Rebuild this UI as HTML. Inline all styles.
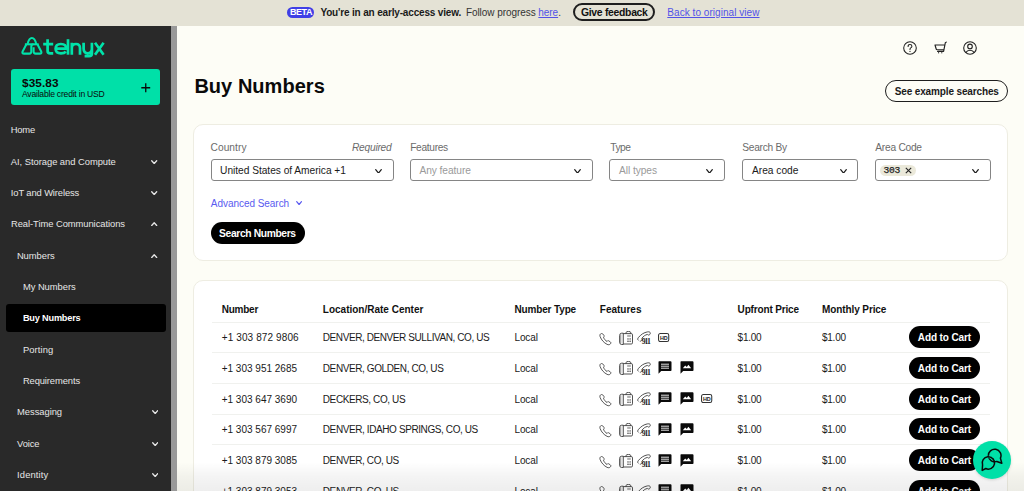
<!DOCTYPE html>
<html><head><meta charset="utf-8">
<style>
*{box-sizing:border-box;margin:0;padding:0}
html,body{width:1024px;height:491px;overflow:hidden;font-family:"Liberation Sans",sans-serif;background:#fdfdf6;color:#111}
.a{position:absolute}
.t{position:absolute;white-space:pre;line-height:normal}
.chev{position:absolute}
.sel{position:absolute;top:159.2px;height:22px;border:1px solid #858585;border-radius:3px;background:#fff}
.line{position:absolute;left:211.5px;width:778px;height:1px;background:#f0f1ee}
.cartbtn{position:absolute;left:909px;width:70.5px;height:22px;border-radius:11px;background:#000}
</style></head><body>
<!-- banner -->
<div class="a" style="left:0;top:0;width:1024px;height:25.6px;background:#e4e2d5"></div>
<div class="a" style="left:286.8px;top:7.3px;width:27px;height:11px;border-radius:5.5px;background:#3f3fe6"></div>
<div class="t" style="left:290px;top:7.3px;font-size:9px;font-weight:bold;color:#fff;letter-spacing:-0.45px;line-height:11px">BETA</div>
<div class="a" style="left:572.7px;top:3.4px;width:82.6px;height:17.4px;border:2px solid #1e1e1e;border-radius:9px"></div>
<div class="t" style="left:581px;top:7.1px;font-size:10.4px;font-weight:bold;color:#111;letter-spacing:-0.3px">Give feedback</div>
<div class="t" style="left:667.3px;top:6.7px;font-size:10px;color:#5252e8;text-decoration:underline;letter-spacing:0.05px">Back to original view</div>
<!-- sidebar -->
<div class="a" style="left:0;top:25.6px;width:172px;height:466px;background:#292929"></div>
<div class="a" style="left:171.1px;top:25.6px;width:5.5px;height:466px;background:#999"></div>
<div class="a" style="left:5.5px;top:304px;width:160px;height:28px;border-radius:3px;background:#000"></div>
<div class="a" style="left:11px;top:69px;width:149px;height:35.7px;border-radius:3px;background:#00e0a8"></div>
<svg class="a" style="left:140.8px;top:82.6px" width="10" height="10" viewBox="0 0 10 10"><path d="M4.75 0.3V9.2M0.3 4.75H9.2" stroke="#0a0a0a" stroke-width="1.3"/></svg>
<!-- logo icon -->
<svg class="a" style="left:20px;top:35px" width="24" height="22" viewBox="0 0 24 22" fill="none" stroke="#00e3aa" stroke-width="2.05" stroke-linejoin="round" stroke-linecap="butt">
<path d="M7.5 9.3 C9.4 1 14.4 1 16.3 9.3"/>
<path d="M4.9 9.3 H18.6"/>
<path d="M6.4 9.3 L2.6 16.4 Q1.7 18.6 4.1 18.6 H9.4 Q11.3 18.6 11.3 16.5 V11.5 Q11.3 9.3 13.4 9.3"/>
<path d="M17.4 9.3 L21.2 16.4 Q22.1 18.6 19.7 18.6 H15.6 Q13.6 18.6 13.6 16.5 V12.3"/>
</svg>
<svg class="a" style="left:42px;top:35px" width="66" height="26" viewBox="0 0 66 26" fill="none" stroke="#00e3aa" stroke-width="2.7" stroke-linejoin="round">
<path d="M5.6 4.2 V16 Q5.6 18.4 8.2 18.4 H11.2 M1.2 9.2 H11.2"/>
<path d="M13.6 13.7 H24.3 Q24.3 9 18.9 9 Q13.6 9 13.6 13.8 Q13.6 18.4 19 18.4 Q22.4 18.4 23.8 16.6"/>
<path d="M26 4.2 V19.7"/>
<path d="M29.8 19.7 V7.8 M29.8 13.2 Q29.8 9 34 9 Q38 9 38 13.2 V19.7"/>
<path d="M41.6 7.8 V13.6 Q41.6 18.4 45.8 18.4 Q49.9 18.4 49.9 13.6 M49.9 7.8 V18.6 Q49.9 21.2 47 21.2 H42.6"/>
<path d="M53 7.8 L61.6 19.7 M61.6 7.8 L53 19.7"/>
</svg>
<!-- header icons -->
<svg class="a" style="left:902.4px;top:39.8px" width="16" height="16" viewBox="0 0 16 16" fill="none" stroke="#222" stroke-width="1.05"><circle cx="8" cy="8" r="6.3"/><path d="M6.1 6.4 Q6.1 4.5 8 4.5 Q9.9 4.5 9.9 6.2 Q9.9 7.3 8.7 7.9 Q8 8.3 8 9.5" stroke-linecap="round"/><circle cx="8" cy="11.4" r="0.6" fill="#222" stroke="none"/></svg>
<svg class="a" style="left:932.5px;top:40.8px" width="15" height="14" viewBox="0 0 15 14" fill="none" stroke="#222" stroke-width="1.15" stroke-linejoin="round" stroke-linecap="round"><path d="M2 4 H10.9 M2 4 L3.2 8 Q3.4 8.7 4.2 8.7 H10.6 M4.6 10.4 H10.6 L12.3 1.8 L13.3 1.1"/><g fill="#222" stroke="none"><rect x="5" y="10.9" width="1.1" height="1.5" fill="#555"/><rect x="8.2" y="10.9" width="1.1" height="1.5" fill="#555"/></g></svg>
<svg class="a" style="left:962.4px;top:39.8px" width="16" height="16" viewBox="0 0 16 16" fill="none" stroke="#222" stroke-width="1.1"><circle cx="8" cy="8" r="6.3"/><circle cx="8" cy="6.4" r="2.3"/><path d="M3.8 12.6 Q5.2 10.2 8 10.2 Q10.8 10.2 12.2 12.6"/></svg>
<!-- see example -->
<div class="a" style="left:885.4px;top:80.2px;width:122.5px;height:21.5px;border:1.7px solid #1e1e1e;border-radius:11px"></div>
<!-- search card -->
<div class="a" style="left:192.9px;top:123.8px;width:815px;height:137.2px;background:#fff;border:1px solid #eeede2;border-radius:10px"></div>
<div class="sel" style="left:210.5px;width:183px"></div>
<div class="sel" style="left:410.2px;width:182.6px"></div>
<div class="sel" style="left:609.2px;width:116.2px"></div>
<div class="sel" style="left:742.2px;width:115.9px"></div>
<div class="sel" style="left:875.3px;width:116px"></div>
<div class="a" style="left:880px;top:164.5px;width:36.3px;height:11.7px;border-radius:6px;background:#ebe9da"></div>
<div class="t" style="left:883.6px;top:165px;font-family:'Liberation Mono',monospace;font-size:9.6px;color:#222;letter-spacing:-0.3px;-webkit-text-stroke:0.25px #222">303</div>
<svg class="a" style="left:904.6px;top:167.4px" width="7" height="7" viewBox="0 0 7 7"><path d="M0.8 0.8L6.2 6.2M6.2 0.8L0.8 6.2" stroke="#222" stroke-width="1.1"/></svg>
<div class="a" style="left:210.5px;top:222.3px;width:94px;height:21.5px;border-radius:11px;background:#000"></div>
<!-- results card -->
<div class="a" style="left:192.9px;top:280px;width:815.3px;height:260px;background:#fff;border:1px solid #eeede2;border-radius:10px"></div>
<div class="line" style="top:322px"></div>
<div class="line" style="top:352px"></div>
<div class="line" style="top:383px"></div>
<div class="line" style="top:413.5px"></div>
<div class="line" style="top:444px"></div>
<div class="cartbtn" style="top:326.20px"></div>
<div class="cartbtn" style="top:356.95px"></div>
<div class="cartbtn" style="top:387.70px"></div>
<div class="cartbtn" style="top:418.45px"></div>
<div class="cartbtn" style="top:449.20px"></div>
<div class="cartbtn" style="top:479.95px"></div>
<svg class="a" style="left:599.3px;top:332.6px" width="13" height="13" viewBox="0 0 13 13" fill="none" stroke="#3a3a3a" stroke-width="0.85" stroke-linejoin="round"><path d="M1.6 0.9 C2.4 0.2 3.3 0.3 3.8 1 L5 2.5 C5.5 3.2 5.2 3.7 4.5 4.2 C5.2 6.2 6.3 7.5 8 8.4 C8.5 7.7 9 7.4 9.7 7.8 L11.3 8.9 C12 9.4 12 10.2 11.4 10.9 C10.5 11.9 9.3 12 8 11.3 C5 9.8 2.4 7 1.1 3.6 C0.7 2.5 0.9 1.5 1.6 0.9 Z"/></svg>
<svg class="a" style="left:618.5px;top:330.6px" width="14" height="14" viewBox="0 0 14 14" fill="none" stroke="#333" stroke-width="0.85"><path d="M4.3 2.2 H2.6 Q0.6 2.2 0.6 4.6 V11 Q0.6 13.5 2.6 13.5 H4.3 Z" fill="#f4f4f4"/><path d="M1.7 3.6 V12.1" stroke="#999" stroke-width="1"/><path d="M4.3 2.6 H12.3 Q13.5 2.6 13.5 3.8 V11.8 Q13.5 13 12.3 13 H4.3"/><path d="M7 2.6 V1.8 Q7 0.4 9.4 0.4 Q11.8 0.4 11.8 1.8 V2.6"/><path d="M8.2 4.4 H11.8 M8.2 5.4 H11.8" stroke-width="0.55" stroke="#666"/><g fill="#333" stroke="none"><circle cx="9" cy="7.9" r="0.72"/><circle cx="11.1" cy="7.9" r="0.72"/><circle cx="9" cy="10.2" r="0.72"/><circle cx="11.1" cy="10.2" r="0.72"/></g></svg>
<svg class="a" style="left:637.3px;top:330.8px" width="15" height="15" viewBox="0 0 15 15" fill="none" stroke="#333" stroke-width="0.85" stroke-linejoin="round"><path d="M1.4 9.4 C0.4 8.6 0.6 7.5 1.5 6.4 C4.2 3.2 7 1.6 10.4 0.9 C12.2 0.6 13.3 1.1 13.3 2.1 C13.3 3.2 12.5 4 11.6 4.1 C11 4.1 10.7 3.7 10.5 3.4 C8.2 3.9 6.4 5.2 4.9 7.3 C5.3 7.8 5.4 8.4 5 9 C4.4 9.9 3.6 10.3 2.8 10.2"/><text x="4.7" y="12.7" font-family="Liberation Serif" font-weight="bold" font-size="7.7" fill="#1a1a1a" stroke="none" letter-spacing="-0.95">911</text></svg>
<svg class="a" style="left:658.1px;top:332.7px" width="12" height="10" viewBox="0 0 12 10"><rect x="0.55" y="0.55" width="10.2" height="8" rx="1.7" fill="none" stroke="#333" stroke-width="1.05"/><text x="5.65" y="6.5" text-anchor="middle" font-family="Liberation Sans" font-weight="bold" font-size="5.4" fill="#1a1a1a" letter-spacing="-0.15">HD</text></svg>
<svg class="a" style="left:599.3px;top:363.35px" width="13" height="13" viewBox="0 0 13 13" fill="none" stroke="#3a3a3a" stroke-width="0.85" stroke-linejoin="round"><path d="M1.6 0.9 C2.4 0.2 3.3 0.3 3.8 1 L5 2.5 C5.5 3.2 5.2 3.7 4.5 4.2 C5.2 6.2 6.3 7.5 8 8.4 C8.5 7.7 9 7.4 9.7 7.8 L11.3 8.9 C12 9.4 12 10.2 11.4 10.9 C10.5 11.9 9.3 12 8 11.3 C5 9.8 2.4 7 1.1 3.6 C0.7 2.5 0.9 1.5 1.6 0.9 Z"/></svg>
<svg class="a" style="left:618.5px;top:361.35px" width="14" height="14" viewBox="0 0 14 14" fill="none" stroke="#333" stroke-width="0.85"><path d="M4.3 2.2 H2.6 Q0.6 2.2 0.6 4.6 V11 Q0.6 13.5 2.6 13.5 H4.3 Z" fill="#f4f4f4"/><path d="M1.7 3.6 V12.1" stroke="#999" stroke-width="1"/><path d="M4.3 2.6 H12.3 Q13.5 2.6 13.5 3.8 V11.8 Q13.5 13 12.3 13 H4.3"/><path d="M7 2.6 V1.8 Q7 0.4 9.4 0.4 Q11.8 0.4 11.8 1.8 V2.6"/><path d="M8.2 4.4 H11.8 M8.2 5.4 H11.8" stroke-width="0.55" stroke="#666"/><g fill="#333" stroke="none"><circle cx="9" cy="7.9" r="0.72"/><circle cx="11.1" cy="7.9" r="0.72"/><circle cx="9" cy="10.2" r="0.72"/><circle cx="11.1" cy="10.2" r="0.72"/></g></svg>
<svg class="a" style="left:637.3px;top:361.55px" width="15" height="15" viewBox="0 0 15 15" fill="none" stroke="#333" stroke-width="0.85" stroke-linejoin="round"><path d="M1.4 9.4 C0.4 8.6 0.6 7.5 1.5 6.4 C4.2 3.2 7 1.6 10.4 0.9 C12.2 0.6 13.3 1.1 13.3 2.1 C13.3 3.2 12.5 4 11.6 4.1 C11 4.1 10.7 3.7 10.5 3.4 C8.2 3.9 6.4 5.2 4.9 7.3 C5.3 7.8 5.4 8.4 5 9 C4.4 9.9 3.6 10.3 2.8 10.2"/><text x="4.7" y="12.7" font-family="Liberation Serif" font-weight="bold" font-size="7.7" fill="#1a1a1a" stroke="none" letter-spacing="-0.95">911</text></svg>
<svg class="a" style="left:658.1px;top:361.45px" width="14" height="13" viewBox="0 0 14 13"><path d="M1 0.3 H12.6 Q13.5 0.3 13.5 1.2 V9.2 Q13.5 10 12.6 10 H3.2 L0.5 12.8 V1.2 Q0.5 0.3 1 0.3 Z" fill="#0a0a0a"/><path d="M3 3.2 H11 M3 5.2 H11 M3 7.2 H11" stroke="#fff" stroke-width="0.9"/></svg>
<svg class="a" style="left:679.8px;top:361.45px" width="14" height="13" viewBox="0 0 14 13"><path d="M1 0.3 H12.6 Q13.5 0.3 13.5 1.2 V9.2 Q13.5 10 12.6 10 H3.2 L0.5 12.8 V1.2 Q0.5 0.3 1 0.3 Z" fill="#0a0a0a"/><path d="M2.8 7.2 L5.2 4.4 L6.8 6 L8.4 3.8 L11.2 7.2 Z" fill="#fff"/></svg>
<svg class="a" style="left:599.3px;top:394.1px" width="13" height="13" viewBox="0 0 13 13" fill="none" stroke="#3a3a3a" stroke-width="0.85" stroke-linejoin="round"><path d="M1.6 0.9 C2.4 0.2 3.3 0.3 3.8 1 L5 2.5 C5.5 3.2 5.2 3.7 4.5 4.2 C5.2 6.2 6.3 7.5 8 8.4 C8.5 7.7 9 7.4 9.7 7.8 L11.3 8.9 C12 9.4 12 10.2 11.4 10.9 C10.5 11.9 9.3 12 8 11.3 C5 9.8 2.4 7 1.1 3.6 C0.7 2.5 0.9 1.5 1.6 0.9 Z"/></svg>
<svg class="a" style="left:618.5px;top:392.1px" width="14" height="14" viewBox="0 0 14 14" fill="none" stroke="#333" stroke-width="0.85"><path d="M4.3 2.2 H2.6 Q0.6 2.2 0.6 4.6 V11 Q0.6 13.5 2.6 13.5 H4.3 Z" fill="#f4f4f4"/><path d="M1.7 3.6 V12.1" stroke="#999" stroke-width="1"/><path d="M4.3 2.6 H12.3 Q13.5 2.6 13.5 3.8 V11.8 Q13.5 13 12.3 13 H4.3"/><path d="M7 2.6 V1.8 Q7 0.4 9.4 0.4 Q11.8 0.4 11.8 1.8 V2.6"/><path d="M8.2 4.4 H11.8 M8.2 5.4 H11.8" stroke-width="0.55" stroke="#666"/><g fill="#333" stroke="none"><circle cx="9" cy="7.9" r="0.72"/><circle cx="11.1" cy="7.9" r="0.72"/><circle cx="9" cy="10.2" r="0.72"/><circle cx="11.1" cy="10.2" r="0.72"/></g></svg>
<svg class="a" style="left:637.3px;top:392.3px" width="15" height="15" viewBox="0 0 15 15" fill="none" stroke="#333" stroke-width="0.85" stroke-linejoin="round"><path d="M1.4 9.4 C0.4 8.6 0.6 7.5 1.5 6.4 C4.2 3.2 7 1.6 10.4 0.9 C12.2 0.6 13.3 1.1 13.3 2.1 C13.3 3.2 12.5 4 11.6 4.1 C11 4.1 10.7 3.7 10.5 3.4 C8.2 3.9 6.4 5.2 4.9 7.3 C5.3 7.8 5.4 8.4 5 9 C4.4 9.9 3.6 10.3 2.8 10.2"/><text x="4.7" y="12.7" font-family="Liberation Serif" font-weight="bold" font-size="7.7" fill="#1a1a1a" stroke="none" letter-spacing="-0.95">911</text></svg>
<svg class="a" style="left:658.1px;top:392.2px" width="14" height="13" viewBox="0 0 14 13"><path d="M1 0.3 H12.6 Q13.5 0.3 13.5 1.2 V9.2 Q13.5 10 12.6 10 H3.2 L0.5 12.8 V1.2 Q0.5 0.3 1 0.3 Z" fill="#0a0a0a"/><path d="M3 3.2 H11 M3 5.2 H11 M3 7.2 H11" stroke="#fff" stroke-width="0.9"/></svg>
<svg class="a" style="left:679.8px;top:392.2px" width="14" height="13" viewBox="0 0 14 13"><path d="M1 0.3 H12.6 Q13.5 0.3 13.5 1.2 V9.2 Q13.5 10 12.6 10 H3.2 L0.5 12.8 V1.2 Q0.5 0.3 1 0.3 Z" fill="#0a0a0a"/><path d="M2.8 7.2 L5.2 4.4 L6.8 6 L8.4 3.8 L11.2 7.2 Z" fill="#fff"/></svg>
<svg class="a" style="left:700.9px;top:394.2px" width="12" height="10" viewBox="0 0 12 10"><rect x="0.55" y="0.55" width="10.2" height="8" rx="1.7" fill="none" stroke="#333" stroke-width="1.05"/><text x="5.65" y="6.5" text-anchor="middle" font-family="Liberation Sans" font-weight="bold" font-size="5.4" fill="#1a1a1a" letter-spacing="-0.15">HD</text></svg>
<svg class="a" style="left:599.3px;top:424.85px" width="13" height="13" viewBox="0 0 13 13" fill="none" stroke="#3a3a3a" stroke-width="0.85" stroke-linejoin="round"><path d="M1.6 0.9 C2.4 0.2 3.3 0.3 3.8 1 L5 2.5 C5.5 3.2 5.2 3.7 4.5 4.2 C5.2 6.2 6.3 7.5 8 8.4 C8.5 7.7 9 7.4 9.7 7.8 L11.3 8.9 C12 9.4 12 10.2 11.4 10.9 C10.5 11.9 9.3 12 8 11.3 C5 9.8 2.4 7 1.1 3.6 C0.7 2.5 0.9 1.5 1.6 0.9 Z"/></svg>
<svg class="a" style="left:618.5px;top:422.85px" width="14" height="14" viewBox="0 0 14 14" fill="none" stroke="#333" stroke-width="0.85"><path d="M4.3 2.2 H2.6 Q0.6 2.2 0.6 4.6 V11 Q0.6 13.5 2.6 13.5 H4.3 Z" fill="#f4f4f4"/><path d="M1.7 3.6 V12.1" stroke="#999" stroke-width="1"/><path d="M4.3 2.6 H12.3 Q13.5 2.6 13.5 3.8 V11.8 Q13.5 13 12.3 13 H4.3"/><path d="M7 2.6 V1.8 Q7 0.4 9.4 0.4 Q11.8 0.4 11.8 1.8 V2.6"/><path d="M8.2 4.4 H11.8 M8.2 5.4 H11.8" stroke-width="0.55" stroke="#666"/><g fill="#333" stroke="none"><circle cx="9" cy="7.9" r="0.72"/><circle cx="11.1" cy="7.9" r="0.72"/><circle cx="9" cy="10.2" r="0.72"/><circle cx="11.1" cy="10.2" r="0.72"/></g></svg>
<svg class="a" style="left:637.3px;top:423.05px" width="15" height="15" viewBox="0 0 15 15" fill="none" stroke="#333" stroke-width="0.85" stroke-linejoin="round"><path d="M1.4 9.4 C0.4 8.6 0.6 7.5 1.5 6.4 C4.2 3.2 7 1.6 10.4 0.9 C12.2 0.6 13.3 1.1 13.3 2.1 C13.3 3.2 12.5 4 11.6 4.1 C11 4.1 10.7 3.7 10.5 3.4 C8.2 3.9 6.4 5.2 4.9 7.3 C5.3 7.8 5.4 8.4 5 9 C4.4 9.9 3.6 10.3 2.8 10.2"/><text x="4.7" y="12.7" font-family="Liberation Serif" font-weight="bold" font-size="7.7" fill="#1a1a1a" stroke="none" letter-spacing="-0.95">911</text></svg>
<svg class="a" style="left:658.1px;top:422.95px" width="14" height="13" viewBox="0 0 14 13"><path d="M1 0.3 H12.6 Q13.5 0.3 13.5 1.2 V9.2 Q13.5 10 12.6 10 H3.2 L0.5 12.8 V1.2 Q0.5 0.3 1 0.3 Z" fill="#0a0a0a"/><path d="M3 3.2 H11 M3 5.2 H11 M3 7.2 H11" stroke="#fff" stroke-width="0.9"/></svg>
<svg class="a" style="left:679.8px;top:422.95px" width="14" height="13" viewBox="0 0 14 13"><path d="M1 0.3 H12.6 Q13.5 0.3 13.5 1.2 V9.2 Q13.5 10 12.6 10 H3.2 L0.5 12.8 V1.2 Q0.5 0.3 1 0.3 Z" fill="#0a0a0a"/><path d="M2.8 7.2 L5.2 4.4 L6.8 6 L8.4 3.8 L11.2 7.2 Z" fill="#fff"/></svg>
<svg class="a" style="left:599.3px;top:455.6px" width="13" height="13" viewBox="0 0 13 13" fill="none" stroke="#3a3a3a" stroke-width="0.85" stroke-linejoin="round"><path d="M1.6 0.9 C2.4 0.2 3.3 0.3 3.8 1 L5 2.5 C5.5 3.2 5.2 3.7 4.5 4.2 C5.2 6.2 6.3 7.5 8 8.4 C8.5 7.7 9 7.4 9.7 7.8 L11.3 8.9 C12 9.4 12 10.2 11.4 10.9 C10.5 11.9 9.3 12 8 11.3 C5 9.8 2.4 7 1.1 3.6 C0.7 2.5 0.9 1.5 1.6 0.9 Z"/></svg>
<svg class="a" style="left:618.5px;top:453.6px" width="14" height="14" viewBox="0 0 14 14" fill="none" stroke="#333" stroke-width="0.85"><path d="M4.3 2.2 H2.6 Q0.6 2.2 0.6 4.6 V11 Q0.6 13.5 2.6 13.5 H4.3 Z" fill="#f4f4f4"/><path d="M1.7 3.6 V12.1" stroke="#999" stroke-width="1"/><path d="M4.3 2.6 H12.3 Q13.5 2.6 13.5 3.8 V11.8 Q13.5 13 12.3 13 H4.3"/><path d="M7 2.6 V1.8 Q7 0.4 9.4 0.4 Q11.8 0.4 11.8 1.8 V2.6"/><path d="M8.2 4.4 H11.8 M8.2 5.4 H11.8" stroke-width="0.55" stroke="#666"/><g fill="#333" stroke="none"><circle cx="9" cy="7.9" r="0.72"/><circle cx="11.1" cy="7.9" r="0.72"/><circle cx="9" cy="10.2" r="0.72"/><circle cx="11.1" cy="10.2" r="0.72"/></g></svg>
<svg class="a" style="left:637.3px;top:453.8px" width="15" height="15" viewBox="0 0 15 15" fill="none" stroke="#333" stroke-width="0.85" stroke-linejoin="round"><path d="M1.4 9.4 C0.4 8.6 0.6 7.5 1.5 6.4 C4.2 3.2 7 1.6 10.4 0.9 C12.2 0.6 13.3 1.1 13.3 2.1 C13.3 3.2 12.5 4 11.6 4.1 C11 4.1 10.7 3.7 10.5 3.4 C8.2 3.9 6.4 5.2 4.9 7.3 C5.3 7.8 5.4 8.4 5 9 C4.4 9.9 3.6 10.3 2.8 10.2"/><text x="4.7" y="12.7" font-family="Liberation Serif" font-weight="bold" font-size="7.7" fill="#1a1a1a" stroke="none" letter-spacing="-0.95">911</text></svg>
<svg class="a" style="left:658.1px;top:453.7px" width="14" height="13" viewBox="0 0 14 13"><path d="M1 0.3 H12.6 Q13.5 0.3 13.5 1.2 V9.2 Q13.5 10 12.6 10 H3.2 L0.5 12.8 V1.2 Q0.5 0.3 1 0.3 Z" fill="#0a0a0a"/><path d="M3 3.2 H11 M3 5.2 H11 M3 7.2 H11" stroke="#fff" stroke-width="0.9"/></svg>
<svg class="a" style="left:679.8px;top:453.7px" width="14" height="13" viewBox="0 0 14 13"><path d="M1 0.3 H12.6 Q13.5 0.3 13.5 1.2 V9.2 Q13.5 10 12.6 10 H3.2 L0.5 12.8 V1.2 Q0.5 0.3 1 0.3 Z" fill="#0a0a0a"/><path d="M2.8 7.2 L5.2 4.4 L6.8 6 L8.4 3.8 L11.2 7.2 Z" fill="#fff"/></svg>
<svg class="a" style="left:599.3px;top:486.35px" width="13" height="13" viewBox="0 0 13 13" fill="none" stroke="#3a3a3a" stroke-width="0.85" stroke-linejoin="round"><path d="M1.6 0.9 C2.4 0.2 3.3 0.3 3.8 1 L5 2.5 C5.5 3.2 5.2 3.7 4.5 4.2 C5.2 6.2 6.3 7.5 8 8.4 C8.5 7.7 9 7.4 9.7 7.8 L11.3 8.9 C12 9.4 12 10.2 11.4 10.9 C10.5 11.9 9.3 12 8 11.3 C5 9.8 2.4 7 1.1 3.6 C0.7 2.5 0.9 1.5 1.6 0.9 Z"/></svg>
<svg class="a" style="left:618.5px;top:484.35px" width="14" height="14" viewBox="0 0 14 14" fill="none" stroke="#333" stroke-width="0.85"><path d="M4.3 2.2 H2.6 Q0.6 2.2 0.6 4.6 V11 Q0.6 13.5 2.6 13.5 H4.3 Z" fill="#f4f4f4"/><path d="M1.7 3.6 V12.1" stroke="#999" stroke-width="1"/><path d="M4.3 2.6 H12.3 Q13.5 2.6 13.5 3.8 V11.8 Q13.5 13 12.3 13 H4.3"/><path d="M7 2.6 V1.8 Q7 0.4 9.4 0.4 Q11.8 0.4 11.8 1.8 V2.6"/><path d="M8.2 4.4 H11.8 M8.2 5.4 H11.8" stroke-width="0.55" stroke="#666"/><g fill="#333" stroke="none"><circle cx="9" cy="7.9" r="0.72"/><circle cx="11.1" cy="7.9" r="0.72"/><circle cx="9" cy="10.2" r="0.72"/><circle cx="11.1" cy="10.2" r="0.72"/></g></svg>
<svg class="a" style="left:637.3px;top:484.55px" width="15" height="15" viewBox="0 0 15 15" fill="none" stroke="#333" stroke-width="0.85" stroke-linejoin="round"><path d="M1.4 9.4 C0.4 8.6 0.6 7.5 1.5 6.4 C4.2 3.2 7 1.6 10.4 0.9 C12.2 0.6 13.3 1.1 13.3 2.1 C13.3 3.2 12.5 4 11.6 4.1 C11 4.1 10.7 3.7 10.5 3.4 C8.2 3.9 6.4 5.2 4.9 7.3 C5.3 7.8 5.4 8.4 5 9 C4.4 9.9 3.6 10.3 2.8 10.2"/><text x="4.7" y="12.7" font-family="Liberation Serif" font-weight="bold" font-size="7.7" fill="#1a1a1a" stroke="none" letter-spacing="-0.95">911</text></svg>
<svg class="a" style="left:658.1px;top:484.45px" width="14" height="13" viewBox="0 0 14 13"><path d="M1 0.3 H12.6 Q13.5 0.3 13.5 1.2 V9.2 Q13.5 10 12.6 10 H3.2 L0.5 12.8 V1.2 Q0.5 0.3 1 0.3 Z" fill="#0a0a0a"/><path d="M3 3.2 H11 M3 5.2 H11 M3 7.2 H11" stroke="#fff" stroke-width="0.9"/></svg>
<svg class="a" style="left:679.8px;top:484.45px" width="14" height="13" viewBox="0 0 14 13"><path d="M1 0.3 H12.6 Q13.5 0.3 13.5 1.2 V9.2 Q13.5 10 12.6 10 H3.2 L0.5 12.8 V1.2 Q0.5 0.3 1 0.3 Z" fill="#0a0a0a"/><path d="M2.8 7.2 L5.2 4.4 L6.8 6 L8.4 3.8 L11.2 7.2 Z" fill="#fff"/></svg>
<div class="t" style="left:320.40px;top:6.68px;font-size:10px;color:#1a1a1a;font-weight:bold;letter-spacing:-0.163px;">You're in an early-access view.</div>
<div class="t" style="left:465.90px;top:6.68px;font-size:10px;color:#333;letter-spacing:-0.058px;">Follow progress <span style="color:#5252e8;text-decoration:underline">here</span>.</div>
<div class="t" style="left:10.80px;top:124.14px;font-size:9.4px;color:#e6e6e6;letter-spacing:-0.205px;">Home</div>
<div class="t" style="left:10.80px;top:155.74px;font-size:9.4px;color:#e6e6e6;letter-spacing:-0.036px;">AI, Storage and Compute</div>
<div class="t" style="left:10.80px;top:186.94px;font-size:9.4px;color:#e6e6e6;letter-spacing:-0.111px;">IoT and Wireless</div>
<div class="t" style="left:11.00px;top:218.34px;font-size:9.4px;color:#e6e6e6;letter-spacing:-0.057px;">Real-Time Communications</div>
<div class="t" style="left:16.90px;top:249.64px;font-size:9.4px;color:#e6e6e6;letter-spacing:-0.039px;">Numbers</div>
<div class="t" style="left:22.90px;top:280.84px;font-size:9.4px;color:#e6e6e6;letter-spacing:-0.038px;">My Numbers</div>
<div class="t" style="left:22.90px;top:343.74px;font-size:9.4px;color:#e6e6e6;letter-spacing:0.097px;">Porting</div>
<div class="t" style="left:22.90px;top:374.54px;font-size:9.4px;color:#e6e6e6;letter-spacing:-0.107px;">Requirements</div>
<div class="t" style="left:17.10px;top:406.44px;font-size:9.4px;color:#e6e6e6;letter-spacing:-0.043px;">Messaging</div>
<div class="t" style="left:17.10px;top:437.94px;font-size:9.4px;color:#e6e6e6;letter-spacing:-0.134px;">Voice</div>
<div class="t" style="left:17.10px;top:469.14px;font-size:9.4px;color:#e6e6e6;letter-spacing:0.124px;">Identity</div>
<div class="t" style="left:22.90px;top:313.12px;font-size:9.2px;color:#fff;font-weight:bold;letter-spacing:-0.193px;">Buy Numbers</div>
<div class="t" style="left:22.00px;top:76.02px;font-size:11.8px;color:#0a0a0a;font-weight:bold;letter-spacing:0.101px;">$35.83</div>
<div class="t" style="left:22.00px;top:88.87px;font-size:8.6px;color:#0a0a0a;letter-spacing:-0.224px;">Available credit in USD</div>
<div class="t" style="left:194.40px;top:74.67px;font-size:20px;color:#0a0a0a;font-weight:bold;letter-spacing:0.037px;">Buy Numbers</div>
<div class="t" style="left:894.70px;top:85.58px;font-size:10px;color:#1a1a1a;font-weight:bold;letter-spacing:-0.134px;">See example searches</div>
<div class="t" style="left:210.50px;top:142.30px;font-size:10.2px;color:#6b6b6b;letter-spacing:0.055px;">Country</div>
<div class="t" style="left:352.00px;top:142.30px;font-size:10.2px;color:#6b6b6b;font-style:italic;letter-spacing:-0.235px;">Required</div>
<div class="t" style="left:410.20px;top:142.30px;font-size:10.2px;color:#6b6b6b;letter-spacing:-0.315px;">Features</div>
<div class="t" style="left:610.20px;top:142.30px;font-size:10.2px;color:#6b6b6b;letter-spacing:-0.465px;">Type</div>
<div class="t" style="left:742.20px;top:142.30px;font-size:10.2px;color:#6b6b6b;letter-spacing:-0.250px;">Search By</div>
<div class="t" style="left:875.30px;top:142.30px;font-size:10.2px;color:#6b6b6b;letter-spacing:-0.252px;">Area Code</div>
<div class="t" style="left:220.10px;top:165.20px;font-size:10.2px;color:#1a1a1a;letter-spacing:-0.029px;">United States of America +1</div>
<div class="t" style="left:419.50px;top:165.20px;font-size:10.2px;color:#9a9a9a;letter-spacing:-0.071px;">Any feature</div>
<div class="t" style="left:619.00px;top:165.20px;font-size:10.2px;color:#9a9a9a;letter-spacing:-0.064px;">All types</div>
<div class="t" style="left:752.00px;top:165.20px;font-size:10.2px;color:#1a1a1a;">Area code</div>
<div class="t" style="left:210.80px;top:197.58px;font-size:10px;color:#5a5af0;letter-spacing:-0.040px;">Advanced Search</div>
<div class="t" style="left:219.10px;top:227.71px;font-size:10.3px;color:#fff;font-weight:bold;letter-spacing:-0.373px;">Search Numbers</div>
<div class="t" style="left:221.70px;top:303.98px;font-size:10px;color:#111;font-weight:bold;letter-spacing:-0.239px;">Number</div>
<div class="t" style="left:322.80px;top:303.98px;font-size:10px;color:#111;font-weight:bold;">Location/Rate Center</div>
<div class="t" style="left:514.40px;top:303.98px;font-size:10px;color:#111;font-weight:bold;letter-spacing:-0.137px;">Number Type</div>
<div class="t" style="left:599.80px;top:303.98px;font-size:10px;color:#111;font-weight:bold;">Features</div>
<div class="t" style="left:737.60px;top:303.98px;font-size:10px;color:#111;font-weight:bold;letter-spacing:-0.154px;">Upfront Price</div>
<div class="t" style="left:822.00px;top:303.98px;font-size:10px;color:#111;font-weight:bold;letter-spacing:-0.098px;">Monthly Price</div>
<div class="t" style="left:221.70px;top:332.08px;font-size:10px;color:#1a1a1a;letter-spacing:0.117px;">+1 303 872 9806</div>
<div class="t" style="left:322.80px;top:332.08px;font-size:10px;color:#1a1a1a;letter-spacing:-0.414px;">DENVER, DENVER SULLIVAN, CO, US</div>
<div class="t" style="left:514.40px;top:332.08px;font-size:10px;color:#1a1a1a;letter-spacing:-0.077px;">Local</div>
<div class="t" style="left:737.60px;top:332.08px;font-size:10px;color:#1a1a1a;letter-spacing:-0.258px;">$1.00</div>
<div class="t" style="left:822.00px;top:332.08px;font-size:10px;color:#1a1a1a;letter-spacing:-0.258px;">$1.00</div>
<div class="t" style="left:917.80px;top:332.08px;font-size:10px;color:#fff;font-weight:bold;letter-spacing:-0.115px;">Add to Cart</div>
<div class="t" style="left:221.70px;top:362.83px;font-size:10px;color:#1a1a1a;">+1 303 951 2685</div>
<div class="t" style="left:322.80px;top:362.83px;font-size:10px;color:#1a1a1a;letter-spacing:-0.400px;">DENVER, GOLDEN, CO, US</div>
<div class="t" style="left:514.40px;top:362.83px;font-size:10px;color:#1a1a1a;letter-spacing:-0.077px;">Local</div>
<div class="t" style="left:737.60px;top:362.83px;font-size:10px;color:#1a1a1a;letter-spacing:-0.258px;">$1.00</div>
<div class="t" style="left:822.00px;top:362.83px;font-size:10px;color:#1a1a1a;letter-spacing:-0.258px;">$1.00</div>
<div class="t" style="left:917.80px;top:362.83px;font-size:10px;color:#fff;font-weight:bold;letter-spacing:-0.115px;">Add to Cart</div>
<div class="t" style="left:221.70px;top:393.58px;font-size:10px;color:#1a1a1a;">+1 303 647 3690</div>
<div class="t" style="left:322.80px;top:393.58px;font-size:10px;color:#1a1a1a;letter-spacing:-0.400px;">DECKERS, CO, US</div>
<div class="t" style="left:514.40px;top:393.58px;font-size:10px;color:#1a1a1a;letter-spacing:-0.077px;">Local</div>
<div class="t" style="left:737.60px;top:393.58px;font-size:10px;color:#1a1a1a;letter-spacing:-0.258px;">$1.00</div>
<div class="t" style="left:822.00px;top:393.58px;font-size:10px;color:#1a1a1a;letter-spacing:-0.258px;">$1.00</div>
<div class="t" style="left:917.80px;top:393.58px;font-size:10px;color:#fff;font-weight:bold;letter-spacing:-0.115px;">Add to Cart</div>
<div class="t" style="left:221.70px;top:424.33px;font-size:10px;color:#1a1a1a;">+1 303 567 6997</div>
<div class="t" style="left:322.80px;top:424.33px;font-size:10px;color:#1a1a1a;letter-spacing:-0.400px;">DENVER, IDAHO SPRINGS, CO, US</div>
<div class="t" style="left:514.40px;top:424.33px;font-size:10px;color:#1a1a1a;letter-spacing:-0.077px;">Local</div>
<div class="t" style="left:737.60px;top:424.33px;font-size:10px;color:#1a1a1a;letter-spacing:-0.258px;">$1.00</div>
<div class="t" style="left:822.00px;top:424.33px;font-size:10px;color:#1a1a1a;letter-spacing:-0.258px;">$1.00</div>
<div class="t" style="left:917.80px;top:424.33px;font-size:10px;color:#fff;font-weight:bold;letter-spacing:-0.115px;">Add to Cart</div>
<div class="t" style="left:221.70px;top:455.08px;font-size:10px;color:#1a1a1a;">+1 303 879 3085</div>
<div class="t" style="left:322.80px;top:455.08px;font-size:10px;color:#1a1a1a;letter-spacing:-0.400px;">DENVER, CO, US</div>
<div class="t" style="left:514.40px;top:455.08px;font-size:10px;color:#1a1a1a;letter-spacing:-0.077px;">Local</div>
<div class="t" style="left:737.60px;top:455.08px;font-size:10px;color:#1a1a1a;letter-spacing:-0.258px;">$1.00</div>
<div class="t" style="left:822.00px;top:455.08px;font-size:10px;color:#1a1a1a;letter-spacing:-0.258px;">$1.00</div>
<div class="t" style="left:917.80px;top:455.08px;font-size:10px;color:#fff;font-weight:bold;letter-spacing:-0.115px;">Add to Cart</div>
<div class="t" style="left:221.70px;top:485.83px;font-size:10px;color:#1a1a1a;">+1 303 879 3053</div>
<div class="t" style="left:322.80px;top:485.83px;font-size:10px;color:#1a1a1a;letter-spacing:-0.400px;">DENVER, CO, US</div>
<div class="t" style="left:514.40px;top:485.83px;font-size:10px;color:#1a1a1a;letter-spacing:-0.077px;">Local</div>
<div class="t" style="left:737.60px;top:485.83px;font-size:10px;color:#1a1a1a;letter-spacing:-0.258px;">$1.00</div>
<div class="t" style="left:822.00px;top:485.83px;font-size:10px;color:#1a1a1a;letter-spacing:-0.258px;">$1.00</div>
<div class="t" style="left:917.80px;top:485.83px;font-size:10px;color:#fff;font-weight:bold;letter-spacing:-0.115px;">Add to Cart</div>
<svg class="a" style="left:151.3px;top:159.5px" width="6.4" height="4" viewBox="0 0 6.4 4"><path d="M0.7 0.7 L3.2 3.5 L5.7 0.7" fill="none" stroke="#e6e6e6" stroke-width="1.3" stroke-linecap="round" stroke-linejoin="round"/></svg>
<svg class="a" style="left:151.3px;top:190.8px" width="6.4" height="4" viewBox="0 0 6.4 4"><path d="M0.7 0.7 L3.2 3.5 L5.7 0.7" fill="none" stroke="#e6e6e6" stroke-width="1.3" stroke-linecap="round" stroke-linejoin="round"/></svg>
<svg class="a" style="left:151.3px;top:222.2px" width="6.4" height="4" viewBox="0 0 6.4 4"><path d="M0.7 3.5 L3.2 0.7 L5.7 3.5" fill="none" stroke="#e6e6e6" stroke-width="1.3" stroke-linecap="round" stroke-linejoin="round"/></svg>
<svg class="a" style="left:151.3px;top:253.5px" width="6.4" height="4" viewBox="0 0 6.4 4"><path d="M0.7 3.5 L3.2 0.7 L5.7 3.5" fill="none" stroke="#e6e6e6" stroke-width="1.3" stroke-linecap="round" stroke-linejoin="round"/></svg>
<svg class="a" style="left:151.6px;top:410.2px" width="6.4" height="4" viewBox="0 0 6.4 4"><path d="M0.7 0.7 L3.2 3.5 L5.7 0.7" fill="none" stroke="#e6e6e6" stroke-width="1.3" stroke-linecap="round" stroke-linejoin="round"/></svg>
<svg class="a" style="left:151.6px;top:441.5px" width="6.4" height="4" viewBox="0 0 6.4 4"><path d="M0.7 0.7 L3.2 3.5 L5.7 0.7" fill="none" stroke="#e6e6e6" stroke-width="1.3" stroke-linecap="round" stroke-linejoin="round"/></svg>
<svg class="a" style="left:151.6px;top:472.7px" width="6.4" height="4" viewBox="0 0 6.4 4"><path d="M0.7 0.7 L3.2 3.5 L5.7 0.7" fill="none" stroke="#e6e6e6" stroke-width="1.3" stroke-linecap="round" stroke-linejoin="round"/></svg>
<svg class="a" style="left:375.1px;top:168.6px" width="7" height="4.6" viewBox="0 0 7 4.6"><path d="M0.7 0.7 L3.5 4.1 L6.3 0.7" fill="none" stroke="#1a1a1a" stroke-width="1.25" stroke-linecap="round" stroke-linejoin="round"/></svg>
<svg class="a" style="left:573.8px;top:168.6px" width="7" height="4.6" viewBox="0 0 7 4.6"><path d="M0.7 0.7 L3.5 4.1 L6.3 0.7" fill="none" stroke="#1a1a1a" stroke-width="1.25" stroke-linecap="round" stroke-linejoin="round"/></svg>
<svg class="a" style="left:706.4px;top:168.6px" width="7" height="4.6" viewBox="0 0 7 4.6"><path d="M0.7 0.7 L3.5 4.1 L6.3 0.7" fill="none" stroke="#1a1a1a" stroke-width="1.25" stroke-linecap="round" stroke-linejoin="round"/></svg>
<svg class="a" style="left:839.5px;top:168.6px" width="7" height="4.6" viewBox="0 0 7 4.6"><path d="M0.7 0.7 L3.5 4.1 L6.3 0.7" fill="none" stroke="#1a1a1a" stroke-width="1.25" stroke-linecap="round" stroke-linejoin="round"/></svg>
<svg class="a" style="left:972.3px;top:168.6px" width="7" height="4.6" viewBox="0 0 7 4.6"><path d="M0.7 0.7 L3.5 4.1 L6.3 0.7" fill="none" stroke="#1a1a1a" stroke-width="1.25" stroke-linecap="round" stroke-linejoin="round"/></svg>
<svg class="a" style="left:296.2px;top:200.5px" width="6.2" height="4" viewBox="0 0 6.2 4"><path d="M0.7 0.7 L3.1 3.5 L5.5 0.7" fill="none" stroke="#5a5af0" stroke-width="1.2" stroke-linecap="round" stroke-linejoin="round"/></svg>
<!-- bottom fade -->
<div class="a" style="left:177px;top:462px;width:847px;height:29px;background:linear-gradient(to bottom,rgba(0,0,0,0),rgba(0,0,0,0.045) 50%,rgba(0,0,0,0.065))"></div>
<!-- chat bubble -->
<div class="a" style="left:973px;top:441px;width:38px;height:38px;border-radius:19px;background:#00e0a8;box-shadow:0 1px 3px rgba(0,0,0,0.15)"></div>
<svg class="a" style="left:980px;top:448px" width="24" height="24" viewBox="0 0 24 24" fill="none" stroke="#0a0a0a" stroke-width="1.5" stroke-linejoin="round" stroke-linecap="round">
<path d="M16.85 13.42 A6.3 6.3 0 1 1 20.41 10.16 L21.8 15.2 Z"/>
<path d="M2.57 17.02 A6.2 6.2 0 1 1 5.78 20.52 L2.2 22.4 Z"/>
<path d="M8.6 8.8 A6.2 6.2 0 0 1 12.8 10.8" stroke="#00e0a8" stroke-width="2.6" stroke-linecap="butt"/>
<path d="M8.6 8.7 A6.2 6.2 0 0 1 12.8 10.7"/>
</svg>
</body></html>
